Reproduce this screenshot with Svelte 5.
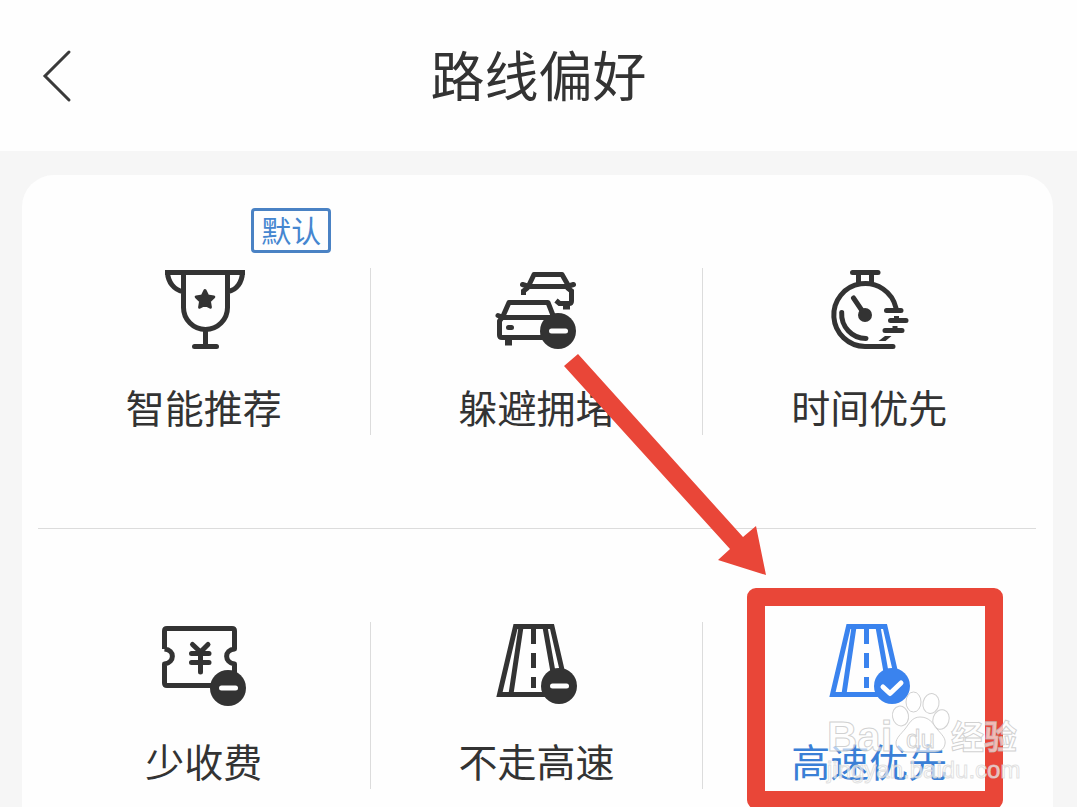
<script>
	let options = [
		{ id: "smart", label: "智能推荐", isDefault: true },
		{ id: "jam", label: "躲避拥堵", badge: "minus", bx: 64, by: 63 },
		{ id: "time", label: "时间优先" },
		{ id: "toll", label: "少收费", badge: "minus", bx: 66, by: 66 },
		{ id: "no-highway", label: "不走高速", badge: "minus", bx: 65, by: 64 },
		{ id: "highway", label: "高速优先", badge: "check", bx: 65, by: 64 }
	];

	let selected = $state("highway");
</script>

<div class="page">
	<header>
		<button class="back" aria-label="返回">
			<svg width="32" height="56" viewBox="0 0 32 56">
				<path d="M29 4 5 28 29 52" fill="none" stroke="#3a3a3a" stroke-width="3" stroke-linecap="round" />
			</svg>
		</button>
		<h1>路线偏好</h1>
	</header>

	<main>
		<div class="grid">
			{#each options as option (option.id)}
				<div class="cell">
					<button
						class="option"
						class:active={selected === option.id}
						aria-pressed={selected === option.id}
						onclick={() => (selected = option.id)}
					>
						<svg class="icon" viewBox="0 0 84 84">
							{#if option.id === "smart"}
								<path d="M3 4.5H83" />
								<path d="M21.5 4.5V39.5a22 22 0 0 0 44 0V4.5M5.5 4.5C6 14 12 22 21 23.5M80.5 4.5C80 14 75 22 66 23.5M43.5 62V78" />
								<path d="M32.5 78.5H54.5" stroke-linecap="round" />
								<path class="solid" d="M43 22.5l2.700 5.500 6.100.9-4.400 4.300 1 6-5.400-2.800-5.400 2.800 1-6-4.400-4.300 6.100-.9z" stroke-width="3" stroke-linejoin="round" />
							{:else if option.id === "jam"}
								<g stroke-linecap="round" stroke-linejoin="round">
									<path d="M35 17 40 6.500H68L74 17M28.500 16.500 35 18.500H73L79.500 16.500" />
									<path d="M9.500 47 15 34.500H54L58.500 46M4 47.500 9 49.500H58" />
									<path d="M8 49.500 5.500 53V67q0 2.500 2.500 2.500H50" />
								</g>
								<path d="M34 19.500 29.500 23V27M73 19.500 77.500 23V33q0 2.500-2.500 2.500H65.500L62 32.500" />
								<path d="M14.500 70V77.500M72.500 36V41.500" stroke-width="7" />
								<path d="M14.500 59.500H17.500" stroke-linecap="round" />
							{:else if option.id === "time"}
								<g stroke-linecap="round">
									<path d="M25.500 4.500H51" />
									<path d="M66 78.500H38A31.500 31.500 0 1 1 69 40" />
									<path d="M26.500 30 38 47M14.700 44.500A24.500 24.500 0 0 0 39 70.500" />
									<path d="M59.500 42.500H74M63.500 52.500H79M58 62.500H75" />
								</g>
								<path d="M31.500 5V16M44.500 5V16" />
								<path d="M69.500 48V53M68 58V62" />
								<circle class="solid" cx="38" cy="47" r="7" stroke="none" />
								<path class="solid" d="M51.500 73 58 68H64.500L58.500 73z" stroke="none" />
							{:else if option.id === "toll"}
								<path d="M2.500 27V9q0-2.500 2.500-2.500H70q2.500 0 2.500 2.500V27C62 28 62 40 72.500 42V55M2.500 27C13 28 13 40 2.500 42V61q0 2.500 2.500 2.500H52" stroke-linejoin="round" />
								<path d="M30.500 22.500 38.500 30 46 22.500M29.500 31.500H47M29.500 40.500H47M38.500 30V50" stroke-linecap="round" />
							{:else}
								<path d="M52 72.500H5.500L21.500 4.500H58L69 52" />
								<path d="M27 5 17 72M51 5 59 50M39.500 6V22M39.500 31V46M39.500 55V66" />
							{/if}

							{#if option.badge}
								<circle class="solid" cx={option.bx} cy={option.by} r="18" stroke="none" />
							{/if}
							{#if option.badge === "minus"}
								<path class="mark" d="M{option.bx - 6.5} {option.by}h14" />
							{:else if option.badge === "check"}
								<path class="mark" d="M{option.bx - 9} {option.by + 1}l7 6.500 11-10.500" />
							{/if}
						</svg>
						<span>{option.label}</span>
					</button>

					{#if option.isDefault}
						<em class="tag">默认</em>
					{/if}

					{#if option.id === "jam"}
						<svg class="arrow" viewBox="0 0 203 222" aria-hidden="true">
							<path d="M14 0 179 183 192 172 202 221 154 206 166 195 0 12z" />
						</svg>
					{/if}

					{#if option.id === "highway"}
						<div class="frame"></div>
						<svg class="watermark" viewBox="0 0 204 100" aria-hidden="true">
							<text x="5" y="61" font-size="42" font-weight="700">Bai</text>
							<g>
								<ellipse cx="78.500" cy="26" rx="8" ry="10" transform="rotate(-10 78.500 26)" />
								<ellipse cx="91.500" cy="12" rx="7.500" ry="10" />
								<ellipse cx="109" cy="13.500" rx="8" ry="10" transform="rotate(12 109 13.500)" />
								<ellipse cx="119" cy="29.500" rx="8" ry="10" transform="rotate(18 119 29.500)" />
								<path d="M98 27c9 0 13 6 17 12 5 6 9 9 8 15-1 6-6 8-12 8H86c-7 0-12-3-12-9 0-5 5-9 9-14s7-12 15-12z" />
							</g>
							<text x="84" y="58" font-size="26" class="du">du</text>
							<text x="129" y="59" font-size="33" font-weight="700">经验</text>
							<text x="5" y="88" font-size="24" class="url">jingyan.baidu.com</text>
						</svg>
					{/if}
				</div>
			{/each}
		</div>
	</main>
</div>

<style>
	:global(body) {
		margin: 0;
		background: #f6f6f6;
	}

	.page {
		height: 100vh;
		overflow: hidden;
		background: #f6f6f6;
		color: #333;
		font-family: "Noto Sans CJK SC", "Noto Sans", sans-serif;
	}

	header {
		display: grid;
		grid-template-columns: 1fr auto 1fr;
		align-items: center;
		box-sizing: border-box;
		height: 151px;
		padding: 0 40px;
		background: #fefefe;
	}

	.back {
		justify-self: start;
		padding: 0;
		border: 0;
		background: none;
		cursor: pointer;
	}

	.back svg {
		display: block;
	}

	h1 {
		margin: 0;
		padding-bottom: 4px;
		font-size: 54px;
		font-weight: 400;
		line-height: 80px;
	}

	main {
		margin: 24px 24px 24px 22px;
		padding: 0 17px 0 16px;
		border-radius: 32px;
		background: #fefefe;
	}

	.grid {
		display: grid;
		grid-template-columns: repeat(3, 1fr);
	}

	.cell {
		position: relative;
		padding: 93px 0;
	}

	.cell:nth-child(-n + 3) {
		border-bottom: 1px solid #dcdcdc;
	}

	.option {
		display: flex;
		flex-direction: column;
		align-items: center;
		gap: 29px;
		box-sizing: border-box;
		width: 100%;
		padding: 0 0 4px;
		border: 0;
		border-right: 1px solid #dcdcdc;
		background: none;
		color: #333;
		font-family: inherit;
		font-size: 39px;
		line-height: 50px;
		cursor: pointer;
	}

	.cell:nth-child(3n) .option {
		border-right-color: transparent;
	}

	.option.active {
		color: #3a7fd6;
	}

	.icon {
		width: 84px;
		height: 84px;
		fill: none;
		stroke: currentColor;
		stroke-width: 5;
	}

	.active .icon {
		color: #3a83ee;
	}

	.solid {
		fill: currentColor;
	}

	.mark {
		stroke: #fff;
		stroke-linecap: round;
		stroke-linejoin: round;
	}

	.tag {
		position: absolute;
		top: 33px;
		left: calc(50% + 47px);
		padding: 0 7px 2px;
		border: 3px solid #4a82c4;
		border-radius: 4px;
		color: #4586d0;
		font-size: 30px;
		font-style: normal;
		line-height: 37px;
	}

	.arrow {
		position: absolute;
		z-index: 2;
		top: 179px;
		left: 193px;
		width: 203px;
		height: 222px;
		fill: #e94638;
		pointer-events: none;
	}

	.frame {
		position: absolute;
		top: 59px;
		right: 33px;
		bottom: 73px;
		left: 44px;
		border: 18px solid #e94638;
		border-radius: 9px;
		pointer-events: none;
	}

	.watermark {
		position: absolute;
		top: 161px;
		left: 119px;
		width: 204px;
		height: 100px;
		fill: #fff;
		fill-opacity: 0.65;
		stroke: #bdbdbd;
		stroke-opacity: 0.7;
		stroke-width: 1;
		font-family: "Liberation Sans", "Noto Sans CJK SC", sans-serif;
		pointer-events: none;
	}

	.du {
		fill-opacity: 0.9;
	}

	.url {
		stroke: #d4d4d4;
	}
</style>
